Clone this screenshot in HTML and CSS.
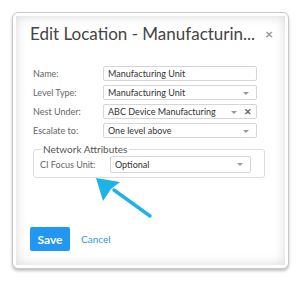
FILE: index.html
```html
<!DOCTYPE html>
<html>
<head><meta charset="utf-8"><link rel="stylesheet" href="styles.css"></head>
<body>
<div class="card">
  <div class="inner">
    <div class="head">
      <span class="title">Edit Location - Manufacturin...</span>
      <span class="close">×</span>
    </div>
    <div class="form">
      <div class="row"><span class="label">Name:</span><div class="field">Manufacturing Unit</div></div>
      <div class="row"><span class="label">Level Type:</span><div class="field sel">Manufacturing Unit<span class="caret"></span></div></div>
      <div class="row"><span class="label">Nest Under:</span><div class="field sel">ABC Device Manufacturing<span class="caret c2"></span><span class="x">✕</span></div></div>
      <div class="row"><span class="label">Escalate to:</span><div class="field sel">One level above<span class="caret"></span></div></div>
      <fieldset class="group">
        <legend>Network Attributes</legend>
        <div class="row"><span class="label l2">CI Focus Unit:</span><div class="field sel f2">Optional<span class="caret"></span></div></div>
      </fieldset>
    </div>
    <div class="arrowbox">
      <svg width="60" height="42" viewBox="0 0 60 42"><path d="M56 38 L20 12" stroke="#1eb2e6" stroke-width="3.4" stroke-linecap="round"/><path d="M2 0 L26 4 L17 11 L9 23 Z" fill="#1eb2e6"/></svg>
    </div>
    <div class="actions">
      <button class="save">Save</button>
      <span class="cancel">Cancel</span>
    </div>
  </div>
</div>
</body>
</html>
```

FILE: styles.css
```css
html,body{margin:0;padding:0;background:#fff;}
body{padding:12px;font-family:"Lato","Open Sans",sans-serif;}
.card{width:277px;height:257px;box-sizing:border-box;border:1px solid #c8c8c8;border-radius:6px;box-shadow:0 2px 3px rgba(0,0,0,0.25);padding:3px;background:#fff;}
.inner{height:100%;box-sizing:border-box;box-shadow:inset 0 0 12px rgba(0,0,0,0.16);padding:6px 12px 0 14px;display:flex;flex-direction:column;}
.head{display:flex;align-items:center;justify-content:space-between;height:22px;}
.title{font-size:17px;color:#444;}
.close{font-size:14px;color:#999;font-weight:bold;}
.form{margin-top:22px;padding-left:3px;display:flex;flex-direction:column;gap:4px;}
.row{display:flex;align-items:center;height:15px;}
.label{width:70px;font-size:9px;color:#666;}
.field{width:154px;height:15px;box-sizing:border-box;border:1px solid #d6d6d6;border-radius:2px;font-size:9px;color:#333;padding:0 4px;display:flex;align-items:center;position:relative;}
.caret{position:absolute;right:7px;top:6px;width:0;height:0;border-left:3px solid transparent;border-right:3px solid transparent;border-top:3px solid #999;}
.caret.c2{right:19px;}
.x{position:absolute;right:4px;top:1px;font-size:9px;color:#666;font-weight:bold;}
.group{margin:2px 0 0 0;border:1px solid #ddd;border-radius:3px;padding:0 6px 4px 6px;width:232px;box-sizing:border-box;}
.group legend{font-size:10px;line-height:11px;color:#555;padding:0 2px;margin-left:1px;}
.group .row{height:17px;margin-top:1px;}
.f2{width:141px;height:17px;}
.arrowbox{height:42px;padding-left:64px;margin-top:0;}
.actions{display:flex;align-items:center;margin-top:7px;}
.save{background:#2196f3;color:#fff;border:none;border-radius:2px;width:40px;height:24px;font-family:"Lato",sans-serif;font-size:12px;font-weight:bold;padding:0;}
.cancel{color:#2d9ae8;font-size:10px;margin-left:11px;}
```
